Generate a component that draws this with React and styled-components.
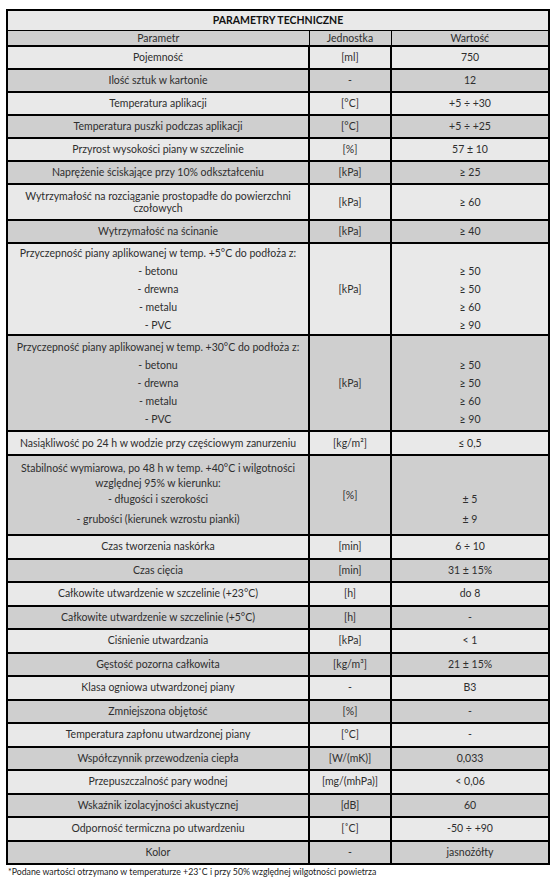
import React from 'react';
import styled, { createGlobalStyle } from 'styled-components';

const GlobalStyle = createGlobalStyle`
  html, body {
    margin: 0;
    padding: 0;
    background: #fff;
  }
  body {
    font-family: Lato, "Open Sans", sans-serif;
    color: #2e2e2e;
  }
`;

const Page = styled.div`
  padding: 9px 8px 0 6px;
  width: 542px;
`;

const Table = styled.table`
  width: 542px;
  border-collapse: collapse;
  table-layout: fixed;
  border: 2px solid #000;
  font-size: 10.5px;
`;

const Cell = styled.td`
  border: 2px solid #000;
  background: ${p => (p.$shade ? '#cfcfcf' : '#e9e9e9')};
  text-align: center;
  vertical-align: middle;
  padding: 0 4px;
  height: ${p => p.$h || 21}px;
  line-height: 13px;
  white-space: nowrap;
`;

const TitleCell = styled(Cell)`
  font-weight: 700;
  border-bottom-width: 1px;
  color: #111;
`;

const HeadCell = styled(Cell)`
  border-width: 1px;
  padding: 0;
`;

const Stack = styled.div`
  display: flex;
  flex-direction: column;
  align-items: center;
`;

const Line = styled.div`
  line-height: ${p => p.$lh || 18}px;
`;

const Note = styled.p`
  margin: 1px 0 0 2px;
  font-size: 8.75px;
  color: #222;
  white-space: nowrap;
`;

const simple = [
  ['Temperatura puszki podczas aplikacji', '[°C]', '+5 ÷ +25'],
  ['Przyrost wysokości piany w szczelinie', '[%]', '57 ± 10'],
  ['Naprężenie ściskające przy 10% odkształceniu', '[kPa]', '≥ 25'],
];

const tail = [
  ['Czas tworzenia naskórka', '[min]', '6 ÷ 10'],
  ['Czas cięcia', '[min]', '31 ± 15%'],
  ['Całkowite utwardzenie w szczelinie (+23°C)', '[h]', 'do 8'],
  ['Całkowite utwardzenie w szczelinie (+5°C)', '[h]', '-'],
  ['Ciśnienie utwardzania', '[kPa]', '< 1'],
  ['Gęstość pozorna całkowita', '[kg/m³]', '21 ± 15%'],
  ['Klasa ogniowa utwardzonej piany', '-', 'B3'],
  ['Zmniejszona objętość', '[%]', '-'],
  ['Temperatura zapłonu utwardzonej piany', '[°C]', '-'],
  ['Współczynnik przewodzenia ciepła', '[W/(mK)]', '0,033'],
  ['Przepuszczalność pary wodnej', '[mg/(mhPa)]', '< 0,06'],
  ['Wskaźnik izolacyjności akustycznej', '[dB]', '60'],
  ['Odporność termiczna po utwardzeniu', '[˚C]', '-50 ÷ +90'],
  ['Kolor', '-', 'jasnożółty'],
];

const adhesion = [
  { temp: '+5°C', vals: ['≥ 50', '≥ 50', '≥ 60', '≥ 90'], shade: false, h: 90 },
  { temp: '+30°C', vals: ['≥ 50', '≥ 50', '≥ 60', '≥ 90'], shade: true, h: 94 },
];

const substrates = ['- betonu', '- drewna', '- metalu', '- PVC'];

const Row = ({ label, unit, value, shade, h }) => (
  <tr>
    <Cell $shade={shade} $h={h}>{label}</Cell>
    <Cell $shade={shade} $h={h}>{unit}</Cell>
    <Cell $shade={shade} $h={h}>{value}</Cell>
  </tr>
);

export default function App() {
  return (
    <Page>
      <GlobalStyle />
      <Table>
        <colgroup>
          <col style={{ width: 302 }} />
          <col style={{ width: 82 }} />
          <col style={{ width: 158 }} />
        </colgroup>
        <tbody>
          <tr>
            <TitleCell colSpan={3} $h={19}>PARAMETRY TECHNICZNE</TitleCell>
          </tr>
          <tr>
            <HeadCell $shade $h={14}>Parametr</HeadCell>
            <HeadCell $shade $h={14}>Jednostka</HeadCell>
            <HeadCell $shade $h={14}>Wartość</HeadCell>
          </tr>
          <Row label="Pojemność" unit="[ml]" value="750" />
          <Row label="Ilość sztuk w kartonie" unit="-" value="12" shade />
          <Row label="Temperatura aplikacji" unit="[°C]" value="+5 ÷ +30" />
          {simple.map(([l, u, v], i) => (
            <Row key={l} label={l} unit={u} value={v} shade={i % 2 === 0} />
          ))}
          <tr>
            <Cell $h={34}>
              <Stack>
                <Line $lh={12.5}>Wytrzymałość na rozciąganie prostopadłe do powierzchni</Line>
                <Line $lh={12.5}>czołowych</Line>
              </Stack>
            </Cell>
            <Cell $h={34}>[kPa]</Cell>
            <Cell $h={34}>≥ 60</Cell>
          </tr>
          <Row label="Wytrzymałość na ścinanie" unit="[kPa]" value="≥ 40" shade />
          {adhesion.map(a => (
            <tr key={a.temp}>
              <Cell $shade={a.shade} $h={a.h}>
                <Stack>
                  <Line>Przyczepność piany aplikowanej w temp. {a.temp} do podłoża z:</Line>
                  {substrates.map(s => <Line key={s}>{s}</Line>)}
                </Stack>
              </Cell>
              <Cell $shade={a.shade} $h={a.h}>[kPa]</Cell>
              <Cell $shade={a.shade} $h={a.h}>
                <Stack>
                  <Line>&nbsp;</Line>
                  {a.vals.map((v, i) => <Line key={i}>{v}</Line>)}
                </Stack>
              </Cell>
            </tr>
          ))}
          <Row label="Nasiąkliwość po 24 h w wodzie przy częściowym zanurzeniu" unit="[kg/m²]" value="≤ 0,5" h={22} />
          <tr>
            <Cell $shade $h={78}>
              <Stack>
                <Line $lh={14.5}>Stabilność wymiarowa, po 48 h w temp. +40°C i wilgotności</Line>
                <Line $lh={14.5}>względnej 95% w kierunku:</Line>
                <Line $lh={19.5}>- długości i szerokości</Line>
                <Line $lh={19.5}>- grubości (kierunek wzrostu pianki)</Line>
              </Stack>
            </Cell>
            <Cell $shade $h={78}>[%]</Cell>
            <Cell $shade $h={78}>
              <Stack>
                <Line $lh={29}>&nbsp;</Line>
                <Line $lh={19.5}>± 5</Line>
                <Line $lh={19.5}>± 9</Line>
              </Stack>
            </Cell>
          </tr>
          {tail.map(([l, u, v], i) => (
            <Row key={l} label={l} unit={u} value={v} shade={i % 2 === 1} h={21.5} />
          ))}
        </tbody>
      </Table>
      <Note>*Podane wartości otrzymano w temperaturze +23˚C i przy 50% względnej wilgotności powietrza</Note>
    </Page>
  );
}
